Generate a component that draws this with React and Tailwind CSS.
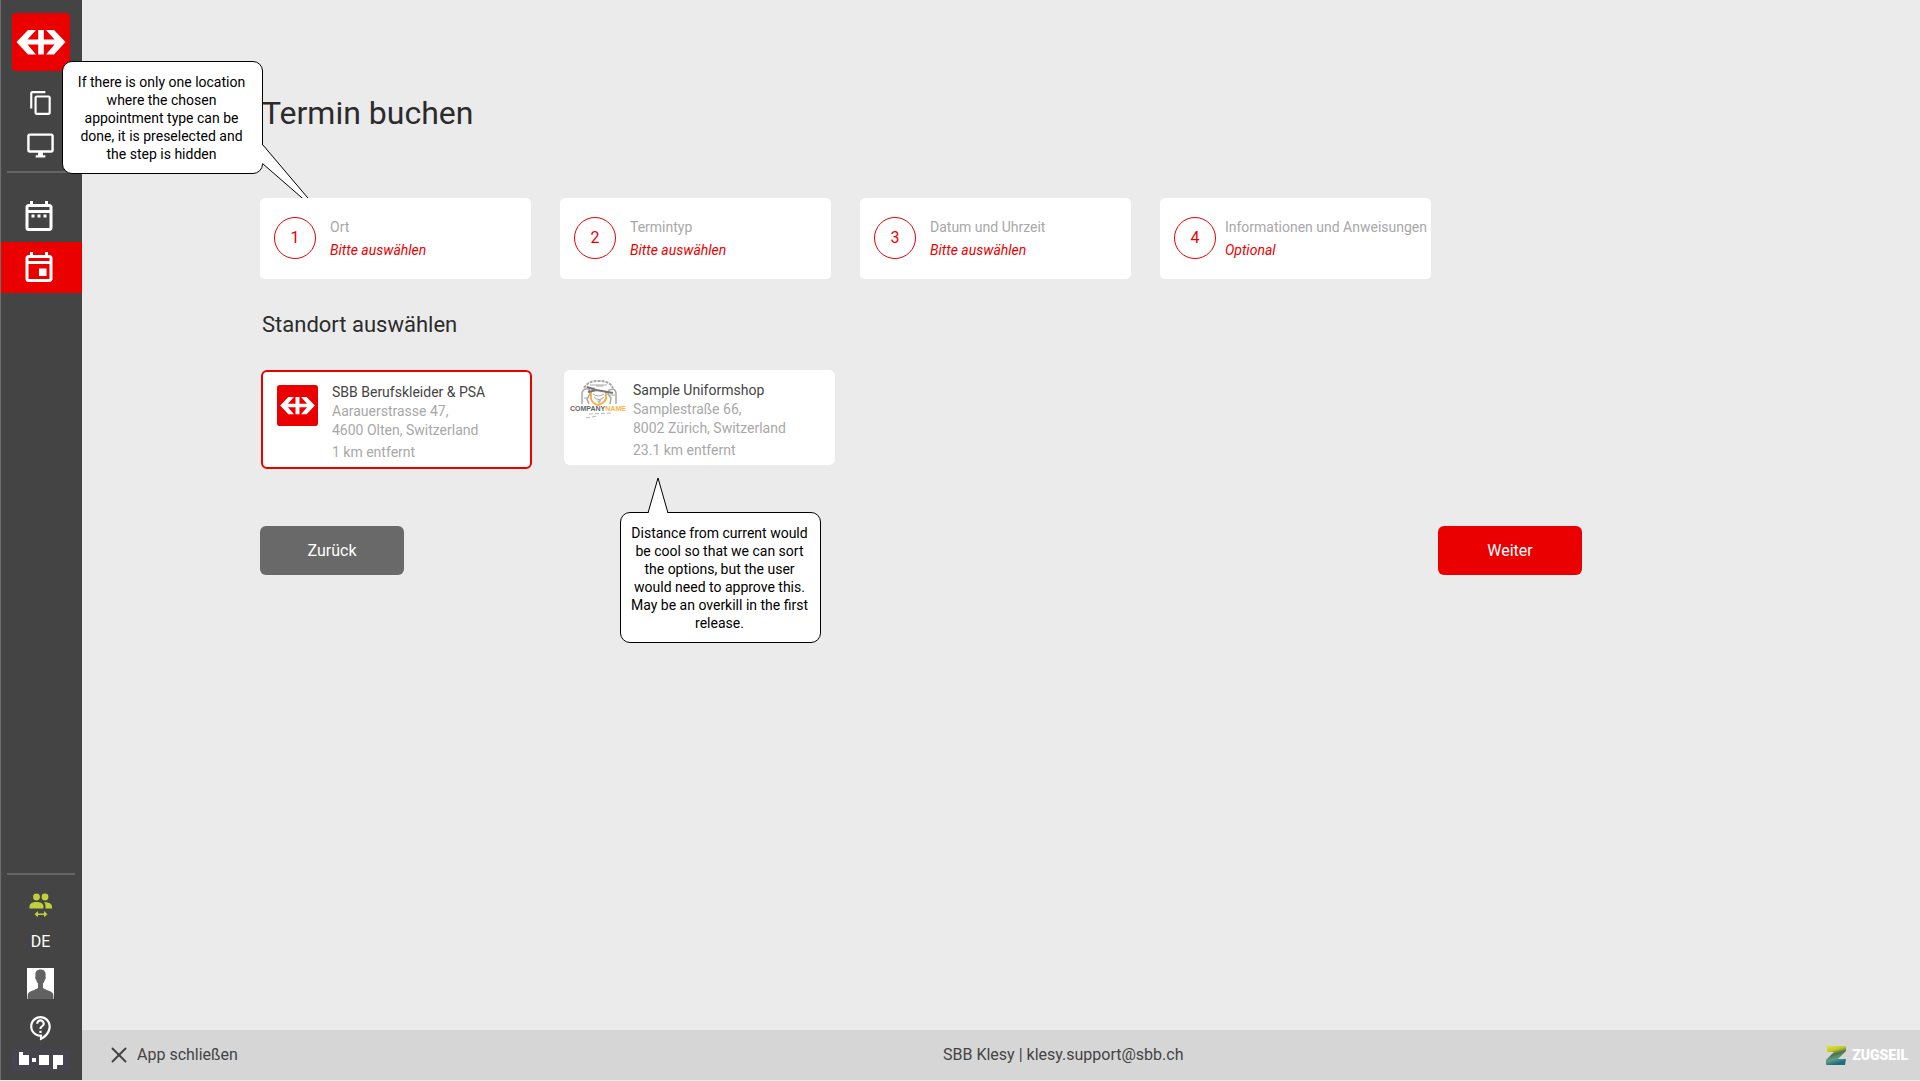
import { useState } from 'react';
import { X } from 'lucide-react';
import {
  MdContentCopy,
  MdOutlineContactSupport,
  MdOutlineDateRange,
  MdOutlineDesktopWindows,
  MdOutlineEvent,
} from 'react-icons/md';

const STEPS = [
  { label: 'Ort', value: 'Bitte auswählen' },
  { label: 'Termintyp', value: 'Bitte auswählen' },
  { label: 'Datum und Uhrzeit', value: 'Bitte auswählen' },
  { label: 'Informationen und Anweisungen', value: 'Optional' },
];

const LOCATIONS = [
  {
    id: 'sbb',
    name: 'SBB Berufskleider & PSA',
    street: 'Aarauerstrasse 47,',
    city: '4600 Olten, Switzerland',
    distance: '1 km entfernt',
    logo: <SbbLogo className="mt-[13px] h-[41px] w-[41px]" />,
  },
  {
    id: 'sample',
    name: 'Sample Uniformshop',
    street: 'Samplestraße 66,',
    city: '8002 Zürich, Switzerland',
    distance: '23.1 km entfernt',
    logo: <CompanyLogo className="mt-[10px] h-[40px] w-[60px]" />,
  },
];

function SbbLogo({ className }) {
  return (
    <svg viewBox="0 0 58 58" className={className} aria-label="SBB">
      <rect width="58" height="58" rx="4" fill="#eb0000" />
      <path
        fill="#fff"
        d="M16 17H24L15.500 26.500H26.200V17H31.800V26.500H42.500L34 17H42L53.500 29 42 41.500H34L42.500 31.500H31.800V41.500H26.200V31.500H15.500L24 41.500H16L4.500 29Z"
      />
    </svg>
  );
}

function CompanyLogo({ className }) {
  return (
    <svg viewBox="0 0 60 40" className={className} aria-label="Company name">
      <g fill="none" stroke="#a8a8a8">
        <path strokeWidth="2" strokeDasharray="3 1" d="M15 8C20 1 24 1 30 1s11 1 14 7" />
        <path strokeWidth="1.5" d="M13 24V14q0-4 4-5h3l1 5-3 5 2 5M47 24V14q0-4-3-5l-4 1-1 4 3 4-1 6" />
        <path d="M24 14q5 4 11 0M25 17q5 5 10 0M27 6h7M15 18h3M41 15h5M21 5h17M20 8h6" />
      </g>
      <path fill="none" stroke="#f7b24a" strokeWidth="2" d="M22 12v7q2 5 7 6 6-2 8-6v-7" />
      <path fill="none" stroke="#777" strokeWidth="2" d="M18 7l9 3 6 1 11 2M19 12l9-2" />
      <path fill="#bbb" d="M26 17l3 4 5-4-4 7z" />
      <text
        x="1"
        y="31"
        fontSize="7"
        fontWeight="700"
        fill="#666"
        className="font-['Liberation_Sans',sans-serif]"
      >
        COMPANY<tspan fill="#f9b347">NAME</tspan>
      </text>
      <path fill="none" stroke="#b5b5b5" strokeDasharray="4 2" d="M20 34l22-1M17 38l12-2" />
    </svg>
  );
}

function SwitchUserIcon() {
  return (
    <svg viewBox="0 0 24 25" className="h-[25px] w-6" fill="#c0d13c">
      <circle cx="7.5" cy="4" r="3.4" />
      <circle cx="16" cy="4" r="3.4" />
      <path d="M.5 15.500v-2.200C.5 10.500 4 9 7.500 9s7 1.500 7 4.300v2.200z" />
      <path d="M15 9.200c4.300-.3 8 1.300 8 4.100v2.200h-6.500v-2.200c0-1.800-.6-3-1.500-4.100z" />
      <path d="M5.500 21.200L9 18v2.400h6V18l3.500 3.200L15 24.300V22H9v2.300z" />
    </svg>
  );
}

function Avatar() {
  return (
    <svg viewBox="0 0 27 31" className="h-[31px] w-[27px]">
      <rect width="27" height="31" fill="#fff" />
      <path
        fill="#626262"
        d="M13.500 1.500c-3.600 0-5.300 2.200-5.100 5.500l.1 1.500c-.7.200-.2 3 .7 3.200.3 1.800.9 2.900 1.800 3.900v4.200C8.500 22.500 3 22.600 1 25.500c-.4 1.500-.5 3.500-.5 5.500h26c0-2-.1-4-.5-5.500-2-2.900-7.500-3-10-5.700v-4.200c.9-1 1.500-2.100 1.800-3.900.9-.2 1.400-3 .7-3.200l.1-1.500c.2-3.300-1.500-5.500-5.100-5.500z"
      />
    </svg>
  );
}

function BiopLogo() {
  return (
    <svg viewBox="0 0 58 22" className="h-[22px] w-[58px]" aria-label="biop">
      <rect width="58" height="22" fill="#45444f" />
      <g fill="#fff">
        <rect x="7" y="3" width="4" height="13" />
        <rect x="7" y="6" width="10" height="10" />
        <rect x="20" y="9" width="4" height="4" />
        <rect x="27" y="6" width="10" height="10" />
        <rect x="41" y="6" width="10" height="10" />
        <rect x="41" y="6" width="4" height="14" />
      </g>
    </svg>
  );
}

function ZugseilMark() {
  return (
    <svg viewBox="0 0 20 19" className="h-[19px] w-5">
      <defs>
        <linearGradient id="zugseil" x1="0" y1="0" x2="0.3" y2="1">
          <stop offset="0" stopColor="#e9e32a" />
          <stop offset="0.3" stopColor="#c3cb30" />
          <stop offset="0.5" stopColor="#4f7348" />
          <stop offset="0.75" stopColor="#5f9e88" />
          <stop offset="1" stopColor="#1d6f80" />
        </linearGradient>
      </defs>
      <path fill="url(#zugseil)" d="M2 0H19Q20 0 20 1V5L12 13H20L19 19H1Q0 19 0 18V14L8 6H1V1Q1 0 2 0Z" />
    </svg>
  );
}

function Sidebar() {
  return (
    <aside className="flex w-[82px] shrink-0 flex-col border-l border-[#6e6e6e] bg-[#444] text-white">
      <div className="flex flex-col items-center pt-[13px] pr-0.5">
        <SbbLogo className="h-[58px] w-[58px]" />
        <button className="mt-[11px] flex h-[42px] items-center" aria-label="Kopieren">
          <MdContentCopy size={26} />
        </button>
        <button className="flex h-[42px] items-center" aria-label="Bildschirm">
          <MdOutlineDesktopWindows size={29} />
        </button>
        <hr className="mt-[5px] mb-[18px] w-[68px] border-t-2 border-[#646464]" />
      </div>
      <nav className="flex flex-col">
        <a href="#kalender" aria-label="Kalender" className="flex h-[51px] items-center justify-center pr-[5px] pb-0.5">
          <MdOutlineDateRange size={36} />
        </a>
        <a
          href="#termine"
          aria-label="Termine"
          className="flex h-[51px] items-center justify-center bg-[#eb0000] pr-[5px] pb-0.5"
        >
          <MdOutlineEvent size={36} />
        </a>
      </nav>

      <div className="mt-auto flex flex-col items-center pr-0.5 pb-[9px]">
        <hr className="w-[68px] border-t-2 border-[#646464]" />
        <button className="mt-[18px]" aria-label="Benutzer wechseln">
          <SwitchUserIcon />
        </button>
        <button className="mt-[14px] text-base leading-5">DE</button>
        <button className="mt-4" aria-label="Profil">
          <Avatar />
        </button>
        <button className="mt-4 mb-2" aria-label="Hilfe">
          <MdOutlineContactSupport size={26} />
        </button>
        <BiopLogo />
      </div>
    </aside>
  );
}

function Callout({ className, tail, children }) {
  return (
    <div
      className={`absolute w-[201px] rounded-[10px] border border-black bg-white pt-[11px] pr-[9px] pb-2.5 pl-[7px] text-center text-sm leading-[18px] text-black ${className}`}
    >
      {tail}
      {children}
    </div>
  );
}

function Step({ number, label, value }) {
  return (
    <button className="relative z-10 flex h-[81px] w-full items-center rounded-[5px] bg-white pr-1 pl-[14px] text-left whitespace-nowrap">
      <span className="mb-0.5 flex h-[42px] w-[42px] shrink-0 items-center justify-center rounded-full border border-[#eb0000] text-base text-[#eb0000]">
        {number}
      </span>
      {/* gives way when the label is long */}
      <span className="w-3.5 shrink" />
      <span className="flex shrink-0 flex-col text-sm leading-[23px]">
        <span className="text-[#a8a8a8]">{label}</span>
        <span className="text-[#eb0000] italic">{value}</span>
      </span>
    </button>
  );
}

function LocationCard({ location, selected, onSelect }) {
  return (
    <button
      onClick={onSelect}
      aria-pressed={selected}
      className={`flex w-[271px] items-start rounded-md bg-white text-left text-sm ${
        selected ? 'border-2 border-[#eb0000]' : ''
      }`}
    >
      <span className="flex w-[69px] shrink-0 justify-center">{location.logo}</span>
      <span className="flex flex-col pt-[10px] pb-[5px] leading-5 text-[#a8a8a8]">
        <span className="text-[#444]">{location.name}</span>
        <span className="leading-[19px]">{location.street}</span>
        <span className="leading-[19px]">{location.city}</span>
        <span className="mt-0.5">{location.distance}</span>
      </span>
    </button>
  );
}

export default function App() {
  const [selected, setSelected] = useState('sbb');

  return (
    <div className="flex min-h-screen bg-[#ebebeb] pb-px font-[Roboto,sans-serif]">
      <Sidebar />

      <div className="relative flex min-w-0 flex-1 flex-col">
        <main className="flex-1 pt-[93px] pr-8 pb-16 pl-[178px]">
          <div className="max-w-[1322px]">
            <h1 className="pl-0.5 text-[32px] leading-10 text-[#2b2b2b]">Termin buchen</h1>

            <ol className="mt-[65px] grid max-w-[1171px] grid-cols-4 gap-[29px]">
              {STEPS.map((step, i) => (
                <li key={step.label} className="relative">
                  {i === 0 && (
                    <Callout
                      className="-top-[137px] -left-[198px]"
                      tail={
                        <svg viewBox="0 0 64 74" className="absolute top-[82px] left-[198px] h-[74px] w-16">
                          <path d="M1 .5L63 73 1 19.500z" fill="#fff" />
                          <path d="M1.500 .5L63 73 1.500 19.500" fill="none" stroke="#000" />
                        </svg>
                      }
                    >
                      If there is only one location where the chosen appointment type can be done, it is preselected
                      and the step is hidden
                    </Callout>
                  )}
                  <Step number={i + 1} label={step.label} value={step.value} />
                </li>
              ))}
            </ol>

            <h2 className="mt-8 pl-0.5 text-[22px] leading-7 text-[#2b2b2b]">Standort auswählen</h2>

            <ul className="mt-[31px] flex flex-wrap items-start gap-8 pl-px">
              {LOCATIONS.map((location) => (
                <li key={location.id} className="relative">
                  <LocationCard
                    location={location}
                    selected={selected === location.id}
                    onSelect={() => setSelected(location.id)}
                  />
                  {location.id === 'sample' && (
                    <Callout
                      className="top-[142px] left-14"
                      tail={
                        <svg viewBox="0 0 22 37" className="absolute -top-[36px] left-[26px] h-[37px] w-[22px]">
                          <path d="M1 36.500L11 1 21 36.500z" fill="#fff" />
                          <path d="M1 36L11 1 21 36" fill="none" stroke="#000" />
                        </svg>
                      }
                    >
                      Distance from current would be cool so that we can sort the options, but the user would need to
                      approve this. May be an overkill in the first release.
                    </Callout>
                  )}
                </li>
              ))}
            </ul>

            <div className="mt-[57px] flex justify-between text-base text-white">
              <button className="h-[49px] w-36 rounded-md bg-[#696969]">Zurück</button>
              <button className="h-[49px] w-36 rounded-md bg-[#eb0000]">Weiter</button>
            </div>
          </div>
        </main>

        <footer className="flex h-[50px] items-center bg-[#d6d6d6] pr-1.5 text-base text-[#444]">
          <div className="w-[47%] pl-6">
            <button className="flex items-center gap-[5px]">
              <X size={26} strokeWidth={1.75} />
              App schließen
            </button>
          </div>
          <p>SBB Klesy | klesy.support@sbb.ch</p>
          <div className="ml-auto flex items-center gap-1.5 pr-1.5">
            <ZugseilMark />
            <span className="text-sm font-black text-white">ZUGSEIL</span>
          </div>
        </footer>
      </div>
    </div>
  );
}
